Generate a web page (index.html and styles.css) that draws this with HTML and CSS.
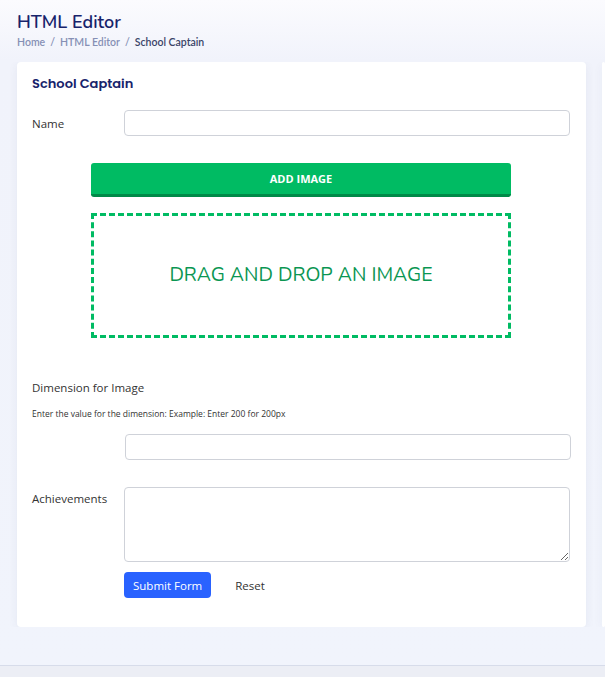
FILE: index.html
```html
<!DOCTYPE html>
<html>
<head>
<meta charset="utf-8">
<link rel="stylesheet" href="styles.css">
</head>
<body>
<div class="page">
  <header class="head">
    <h1 class="title">HTML Editor</h1>
    <nav class="crumbs"><span class="crumb">Home</span><span class="sep">/</span><span class="crumb">HTML Editor</span><span class="sep">/</span><span class="crumb current">School Captain</span></nav>
  </header>
  <div class="row">
    <section class="card">
      <h2 class="card-title">School Captain</h2>
      <div class="field">
        <label class="label">Name</label>
        <input class="input" type="text">
      </div>
      <div class="uploader">
        <button class="add-btn">ADD IMAGE</button>
        <div class="drop">DRAG AND DROP AN IMAGE</div>
      </div>
      <div class="dim-label">Dimension for Image</div>
      <div class="help">Enter the value for the dimension: Example: Enter 200 for 200px</div>
      <div class="field dim-field">
        <span class="label"></span>
        <input class="input dim-input" type="text">
      </div>
      <div class="field area-field">
        <label class="label area-label">Achievements</label>
        <textarea class="textarea"></textarea>
      </div>
      <div class="actions">
        <button class="submit">Submit Form</button>
        <button class="reset">Reset</button>
      </div>
    </section>
    <aside class="card side"></aside>
  </div>
  <footer class="foot"></footer>
</div>
</body>
</html>
```
FILE: styles.css
```css
* { box-sizing: border-box; }
html, body { margin: 0; height: 100%; }
body {
  font-family: "Open Sans", "Noto Sans", sans-serif;
  background: linear-gradient(180deg, #fbfbfe 0px, #f1f3fb 60px, #f1f4fc 100%);
  color: #333;
  overflow: hidden;
}
.page { display: flex; flex-direction: column; min-height: 677px; }
.head { padding: 12px 0 0 17px; height: 62px; }
.title {
  margin: 0;
  font-family: "Nunito", "Lato", "Noto Sans", sans-serif;
  font-size: 18px;
  line-height: 21px;
  font-weight: 600;
  color: #17236b;
}
.crumbs {
  margin-top: 2px;
  font-family: "Lato", "Noto Sans", sans-serif;
  font-size: 10.5px;
  line-height: 14px;
  color: #8690b5;
  font-weight: 600;
  display: flex;
  gap: 5px;
}
.crumb.current { color: #3a4468; }
.row { display: flex; gap: 16px; padding-left: 17px; overflow: hidden; }
.card {
  background: #fff;
  border-radius: 4px;
  box-shadow: 0 2px 10px rgba(60, 70, 120, 0.07);
  width: 569px;
  height: 565px;
  padding: 14px 16px 0 15px;
  flex-shrink: 0;
}
.card.side { flex: 1; min-width: 0; width: auto; padding: 0; }
.card-title {
  margin: 0;
  font-family: "Poppins", "Inter", "Noto Sans", sans-serif;
  font-size: 13px;
  line-height: 16px;
  font-weight: 600;
  color: #17236b;
}
.field { display: flex; align-items: center; }
.card-title + .field { margin-top: 18px; }
.label { width: 92px; flex-shrink: 0; font-size: 11.5px; color: #333; }
.input {
  flex: 1;
  height: 26px;
  border: 1px solid #cfd2d9;
  border-radius: 4px;
  background: #fff;
  padding: 0 8px;
}
.uploader { width: 420px; margin: 27px auto 0; }
.add-btn {
  display: block;
  width: 100%;
  height: 34px;
  border: 0;
  border-bottom: 3px solid #008a48;
  border-radius: 3px;
  background: #00bb63;
  color: #fff;
  font-family: "Open Sans", sans-serif;
  font-weight: 700;
  font-size: 11px;
  padding: 0;
}
.drop {
  margin-top: 16px;
  height: 125px;
  border: 3px dashed #00bb63;
  display: flex;
  align-items: center;
  justify-content: center;
  color: #0a9652;
  font-family: "Nunito", "Lato", "Noto Sans", sans-serif;
  font-size: 19.5px;
  padding-bottom: 3px;
}
.dim-label { margin-top: 42px; font-size: 11.5px; line-height: 16px; }
.help { margin-top: 12px; font-size: 8.5px; line-height: 12px; color: #333; }
.dim-field { margin-top: 14px; }
.dim-input { margin-left: 1px; margin-right: -1px; }
.area-field { margin-top: 27px; align-items: flex-start; }
.area-label { padding-top: 4px; }
.textarea {
  flex: 1;
  height: 75px;
  border: 1px solid #cfd2d9;
  border-radius: 4px;
  resize: vertical;
}
.actions { display: flex; align-items: center; gap: 24px; margin: 10px 0 0 92px; }
.submit {
  height: 26px;
  padding: 0 9px;
  border: 0;
  border-radius: 4px;
  background: #2962ff;
  color: #fff;
  font-family: "Open Sans", sans-serif;
  font-size: 11.5px;
}
.reset {
  border: 0;
  background: none;
  font-family: "Open Sans", sans-serif;
  font-size: 11.5px;
  color: #333;
  padding: 0;
}
.foot {
  margin-top: auto;
  height: 12px;
  border-top: 1px solid #d7dcea;
  background: #eceef5;
}
```
